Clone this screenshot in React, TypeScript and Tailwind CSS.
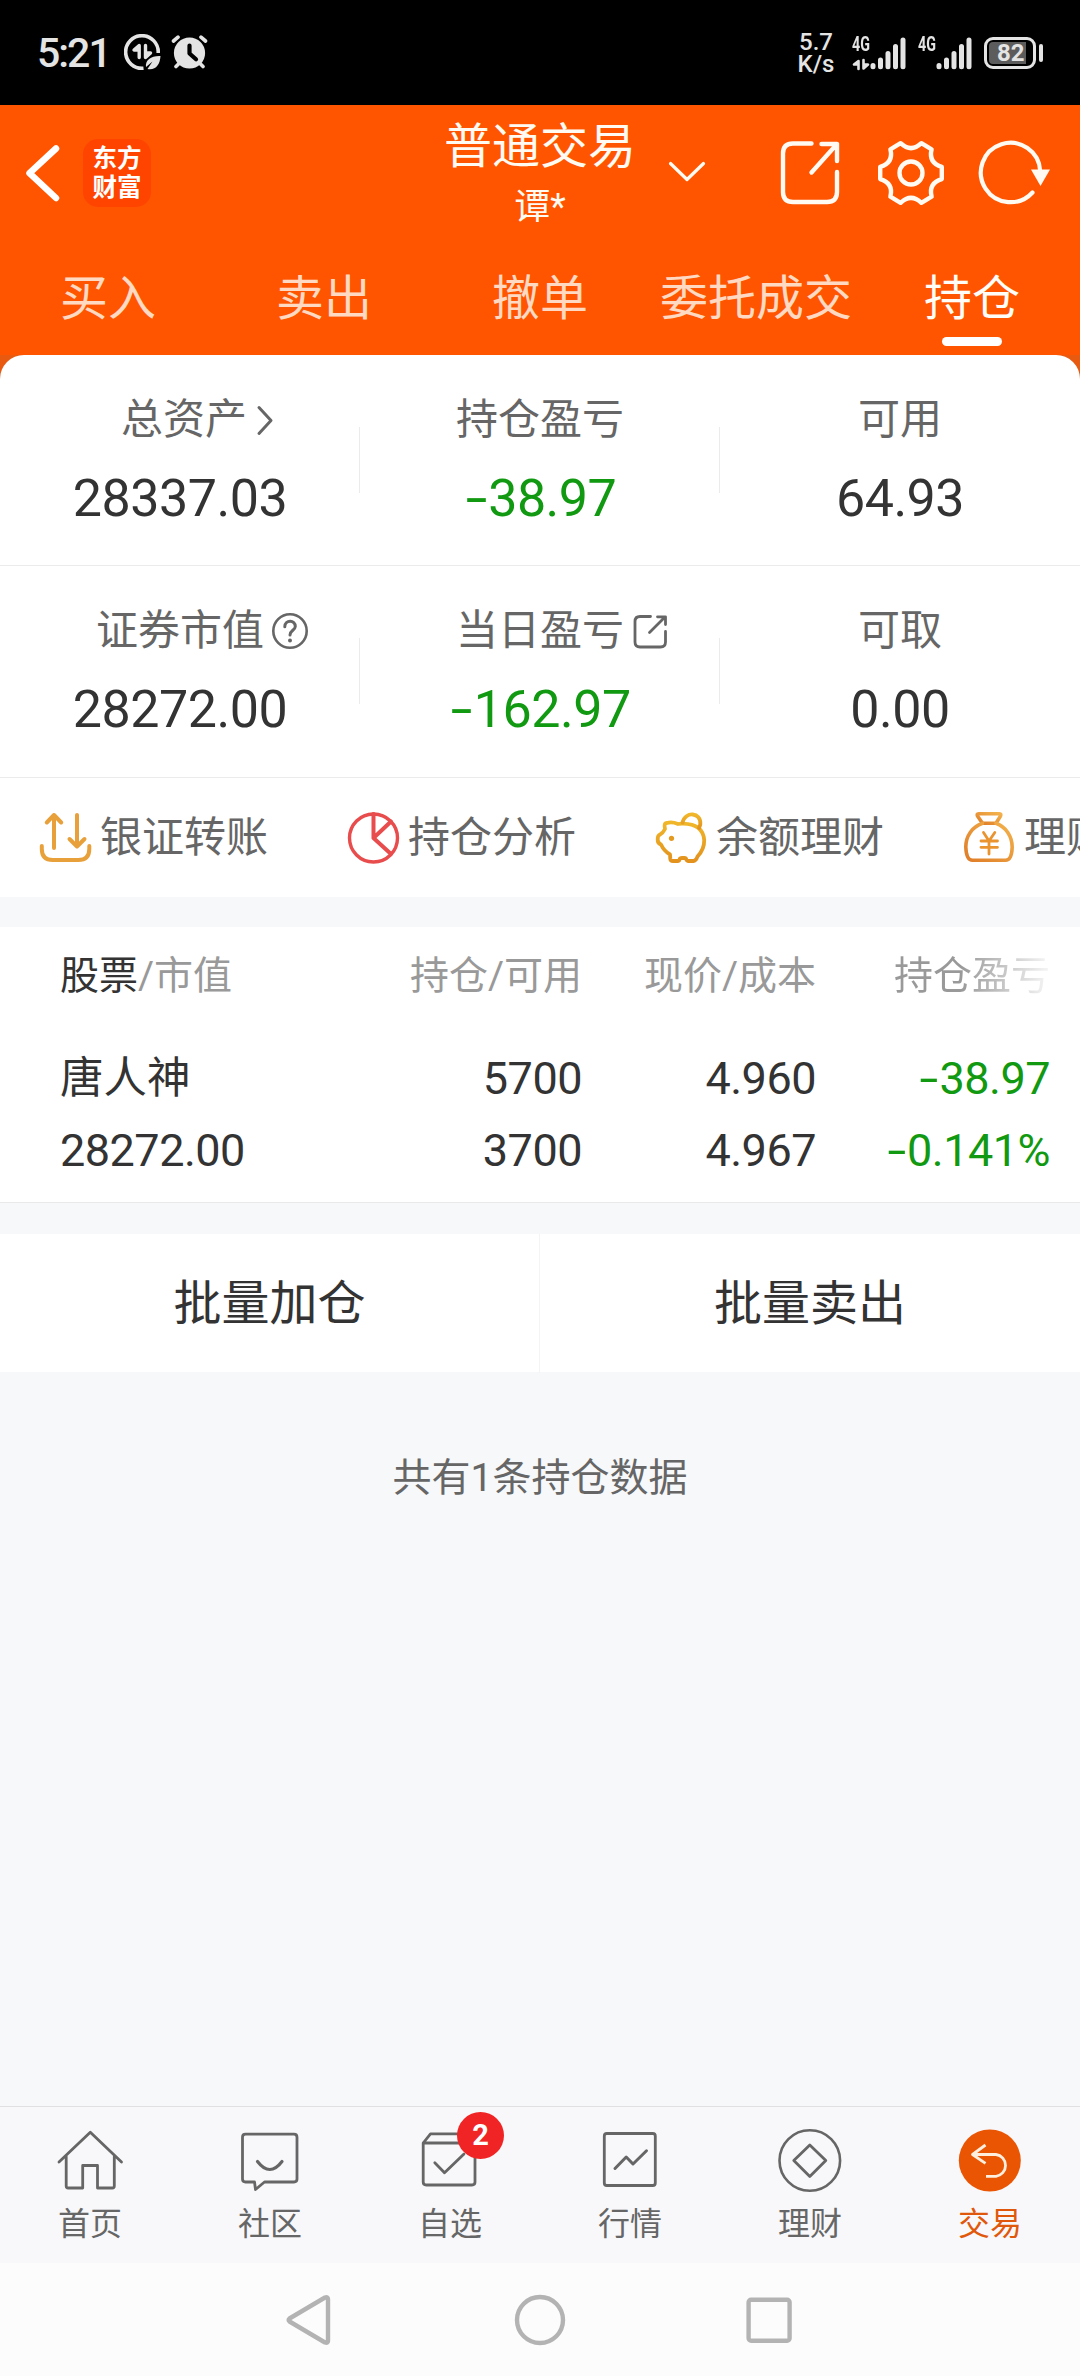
import type { ReactNode } from "react";

type IconProps = { box: string; className: string; children: ReactNode };

function Icon({ box, className, children }: IconProps) {
  return (
    <svg
      viewBox={box}
      className={`block shrink-0 ${className}`}
      fill="none"
      stroke="currentColor"
      strokeLinecap="round"
      strokeLinejoin="round"
    >
      {children}
    </svg>
  );
}

/* ---------- status bar ---------- */

function SignalBars() {
  return (
    <Icon box="0 0 36 34" className="h-[34px] w-[36px]">
      <g strokeWidth="5">
        <path d="M3 29.500v1.300M10.500 24v6.800M18 17.500v13.300M25.500 10.500v20.300M33 4v26.800" />
      </g>
    </Icon>
  );
}

function StatusBar() {
  return (
    <div className="flex h-[105px] items-center justify-between bg-black pl-[37px] pr-[37px] text-[#e4e4e4]">
      <div className="flex items-center">
        <span className="w-[71px] text-[41px] leading-[60px] font-medium tracking-[-2px] whitespace-nowrap">5:21</span>
        <Icon box="124 35 37 37" className="ml-[16px] h-[37px] w-[37px]">
          <path d="M158.200 54A16.300 16.300 0 1 0 143.500 69.200" strokeWidth="3.600" strokeLinecap="butt" />
          <path d="M139.200 58.500V46.500L134 51h5M145.500 46.500V58.500l5-4.500h-5" strokeWidth="3.400" />
          <path d="M160.500 57c-9-.5-15.500 4-14.500 11l6.500-5.500-5 7.500c8 1.500 12.500-4 13-13z" fill="currentColor" stroke="none" />
        </Icon>
        <Icon box="171 35 37 37" className="ml-[10px] h-[37px] w-[37px]">
          <circle cx="189.500" cy="54" r="15.600" fill="currentColor" stroke="none" />
          <path d="M173.500 42l4.500-3.800M205.500 42l-4.500-3.800M179 64.500l-3 3M200 64.500l3 3" strokeWidth="3.600" />
          <path d="M189.500 46.500v8l6.500 5.800" stroke="#000" strokeWidth="4.200" />
        </Icon>
      </div>
      <div className="flex items-center">
        <div className="flex w-[36px] flex-col items-center text-[24px] leading-[22px] font-medium">
          <span>5.7</span>
          <span className="whitespace-nowrap">K/s</span>
        </div>
        <div className="ml-[18px] flex h-[36px] w-[19px] flex-col justify-between">
          <span className="origin-left scale-x-[0.68] text-[21px] leading-[18px] font-bold">4G</span>
          <Icon box="0 0 18 13" className="h-[13px] w-[18px]">
            <path d="M6.500 11V3L2 6.500h4.500M11.500 2v8.500l4.500-4h-4.500" strokeWidth="2.600" />
          </Icon>
        </div>
        <div className="-ml-[1px]">
          <SignalBars />
        </div>
        <div className="ml-[12px] flex h-[36px] w-[18px] flex-col">
          <span className="origin-left scale-x-[0.68] text-[21px] leading-[18px] font-bold">4G</span>
        </div>
        <SignalBars />
        <div className="ml-[12px] flex h-[32px] w-[52px] items-center justify-center rounded-[9px] border-[3px] border-[#e4e4e4] p-[2px]">
          <div className="flex h-full w-full items-center rounded-[4px] bg-[linear-gradient(90deg,#5c5c5c_88%,#000_88%)] pl-[8px] text-[24px] leading-[22px] font-bold">
            82
          </div>
        </div>
        <div className="ml-[3px] h-[18px] w-[4px] rounded-full bg-[#e4e4e4]" />
      </div>
    </div>
  );
}

/* ---------- header ---------- */

function Header() {
  return (
    <div className="bg-[#ff5500] text-[#fffaf2]">
      <div className="grid h-[145px] grid-cols-3">
        <div className="flex h-[135px] items-center pl-[24px]">
          <Icon box="24 144 36 58" className="h-[58px] w-[36px]">
            <path d="M56 148.500L29.500 173.200L56 198" strokeWidth="6.500" stroke="#fff" />
          </Icon>
          <div className="ml-[23px] flex h-[68px] w-[68px] flex-col items-center justify-center rounded-[15px] bg-[#ff4400] text-[24.5px] leading-[29px] font-bold text-white">
            <span>东方</span>
            <span>财富</span>
          </div>
        </div>
        <div className="flex items-start justify-center gap-[32px] pt-[13px]">
          <div className="w-[38px]" />
          <div className="flex flex-col items-center">
            <span className="text-[48px] leading-[58px] whitespace-nowrap">普通交易</span>
            <span className="mt-[3px] text-[36px] leading-[56px]">谭*</span>
          </div>
          <Icon box="665 160 38 24" className="mt-[42px] h-[24px] w-[38px]">
            <path d="M667.500 163.500L684 179.500L700.500 163.500" strokeWidth="3.200" />
          </Icon>
        </div>
        <div className="flex h-[135px] items-center pl-[58px]">
          <Icon box="778 139 64 68" className="h-[68px] w-[64px]">
            <path d="M811.500 143.500H793q-10 0-10 10V192q0 10 10 10h34q10 0 10-10V172" strokeWidth="4.400" />
            <path d="M821.500 144H837V161M837 144L811.500 172.500" strokeWidth="4.400" />
          </Icon>
          <Icon box="-34 -34 68 68" className="ml-[35px] h-[68px] w-[68px]">
            <path
              d="M30.800-6.100V6.100Q17.300 10 20.600 23.700L10.400 29.800Q0 20 -10.400 29.800L-20.600 23.700Q-17.300 10 -30.800 6.100V-6.100Q-17.300-10 -20.600-23.700L-10.400-29.800Q0-20 10.400-29.800L20.600-23.700Q17.300-10 30.800-6.100Z"
              strokeWidth="4.400"
            />
            <circle r="11.500" strokeWidth="4.400" />
          </Icon>
          <Icon box="978 139 74 68" className="ml-[33px] h-[68px] w-[74px]">
            <path d="M1032.500 192.500A29.700 29.700 0 1 1 1040.200 171" strokeWidth="4.200" />
            <path d="M1031 169.500H1050L1040.500 186Z" fill="currentColor" stroke="none" />
          </Icon>
        </div>
      </div>
      <div className="grid h-[105px] grid-cols-5 text-center text-[48px] leading-[97px] text-[#ffd9c2]">
        <span>买入</span>
        <span>卖出</span>
        <span>撤单</span>
        <span className="whitespace-nowrap">委托成交</span>
        <div className="flex flex-col items-center text-[#fffdf8]">
          <span className="h-[87px]">持仓</span>
          <span className="h-[9px] w-[60px] rounded-full bg-white" />
        </div>
      </div>
    </div>
  );
}

/* ---------- asset summary ---------- */

function Amount({ value }: { value: string }) {
  const negative = value.startsWith("-");
  return (
    <>
      {negative && <span className="inline-block w-[0.47em] scale-x-[1.5] text-center">-</span>}
      {negative ? value.slice(1) : value}
    </>
  );
}

type StatProps = { label: string; value: string; icon?: ReactNode; green?: boolean; shift?: boolean; divider?: boolean };

function Stat({ label, value, icon, green, shift, divider }: StatProps) {
  return (
    <div className="relative flex flex-col items-center pt-[35px]">
      <div className={`relative text-[42px] leading-[60px] text-[#666] ${shift ? "ml-[8px]" : ""}`}>
        {label}
        {icon && <span className="absolute top-0 left-full flex h-[60px] items-center">{icon}</span>}
      </div>
      <div
        className={`mt-[17px] text-[52px] leading-[64px] tracking-[-0.5px] whitespace-nowrap ${green ? "text-[#119911]" : "text-[#333]"}`}
      >
        <Amount value={value} />
      </div>
      {divider && <span className="absolute top-[72px] right-0 h-[66px] w-px bg-[#ebebeb]" />}
    </div>
  );
}

function Summary() {
  return (
    <div className="bg-[linear-gradient(#e85a10_24px,#fff_24px)]">
      <div className="rounded-t-[24px] bg-white">
        <div className="grid h-[211px] grid-cols-3 border-b border-[#ebebeb]">
          <Stat
            label="总资产"
            value="28337.03"
            shift
            divider
            icon={
              <Icon box="256 402 18 33" className="ml-[9px] h-[33px] w-[18px]">
                <path d="M259 405.500L271 418.500L259 431.500" strokeWidth="3" />
              </Icon>
            }
          />
          <Stat label="持仓盈亏" value="-38.97" green divider />
          <Stat label="可用" value="64.93" />
        </div>
        <div className="grid h-[212px] grid-cols-3 border-b border-[#ebebeb]">
          <Stat
            label="证券市值"
            value="28272.00"
            divider
            icon={
              <Icon box="-19 -19 38 38" className="ml-[7px] h-[38px] w-[38px]">
                <circle r="16.700" strokeWidth="2.600" />
                <path d="M-5.200-4.200C-5.200-11.500 5.500-11.500 5.300-4.500C5.200-.8 0-.5 0 4" strokeWidth="3" />
                <circle cy="9.600" r="2" fill="currentColor" stroke="none" />
              </Icon>
            }
          />
          <Stat
            label="当日盈亏"
            value="-162.97"
            green
            divider
            icon={
              <Icon box="632 611 37 37" className="ml-[8px] h-[37px] w-[37px]">
                <path d="M650.500 614.500H640q-5 0-5 5V640q0 5 5 5h20.500q5 0 5-5V629.500" strokeWidth="2.800" />
                <path d="M657.500 614.800H665.500V622.500M665 615L649.500 630.500" strokeWidth="2.800" />
              </Icon>
            }
          />
          <Stat label="可取" value="0.00" />
        </div>
      </div>
    </div>
  );
}

/* ---------- quick actions ---------- */

function QuickAction({ label, children }: { label: string; children: ReactNode }) {
  return (
    <div className="flex w-[308px] shrink-0 items-center">
      {children}
      <span className="ml-[6px] text-[42px] leading-[60px] whitespace-nowrap text-[#666]">{label}</span>
    </div>
  );
}

function QuickActions() {
  return (
    <div className="flex h-[119px] items-center overflow-hidden bg-white pl-[38px]">
      <QuickAction label="银证转账">
        <Icon box="38 809 56 56" className="h-[56px] w-[56px] text-[#e8a03a]">
          <path
            d="M54 847V814M46.800 821.500L54 814L61.200 821.500M77 814V845M69.500 838L77 845.500L84.500 838M41.800 845v3q0 11 11 11h25.500q11 0 11-11v-3"
            strokeWidth="4"
          />
        </Icon>
      </QuickAction>
      <QuickAction label="持仓分析">
        <Icon box="346 809 56 56" className="h-[56px] w-[56px] text-[#e84c4c]">
          <circle cx="373.500" cy="837" r="24" strokeWidth="3.400" />
          <path d="M373.500 813V837L391 820.500M373.500 837L391 853" strokeWidth="4" />
        </Icon>
      </QuickAction>
      <QuickAction label="余额理财">
        <Icon box="654 809 56 56" className="h-[56px] w-[56px]">
          <defs>
            <linearGradient id="pig" x1="0" y1="0" x2="0" y2="1">
              <stop offset="0" stopColor="#f0b72a" />
              <stop offset="1" stopColor="#e3921e" />
            </linearGradient>
          </defs>
          <g stroke="url(#pig)" strokeWidth="3.800">
            <path d="M667 822Q663.500 822 665 828Q663 832 660 833.500Q657.500 834.500 657.700 838.500Q657.500 842 661 843.500Q664 850 670 853.500L670.300 858Q670.500 860 673 860H677.500Q679.300 860 679.500 858.500Q680 857 682 857H684.500Q686 857 686.300 858.500Q686.800 860 688.500 860H693.500Q696 860 697.500 855.500Q704.500 848 704.200 839Q703 823 683 822.600Q680.500 822.500 678 823Q672 820.500 667 822Z" />
            <path d="M682.500 821.500C685 810 701.500 811 700.300 823.500L699 827" />
          </g>
          <circle cx="671.500" cy="837.300" r="2.600" fill="#e39a1e" stroke="none" />
        </Icon>
      </QuickAction>
      <QuickAction label="理财产品">
        <Icon box="962 809 56 56" className="h-[56px] w-[56px]">
          <defs>
            <linearGradient id="bag" x1="1" y1="0" x2="0" y2="1">
              <stop offset="0" stopColor="#f3b24c" />
              <stop offset="1" stopColor="#df7d28" />
            </linearGradient>
          </defs>
          <g stroke="url(#bag)" strokeWidth="3.600">
            <path d="M978.500 812.800H999.500Q1001.500 812.800 1000.500 815L996 822.300H982.500L977.500 815Q976.500 812.800 978.500 812.800Z" />
            <path d="M982.500 822.300C972 826 965.800 835 965.800 846Q966.300 859.300 972.500 859.300H1005.500Q1011.800 859.300 1012.200 846C1012 835 1006 826 996 822.300" />
          </g>
          <path d="M983.500 831.500L989 840L994.800 831.500M981 840H997.500M981 846.300H997.500M989 840V853" stroke="#ea9430" strokeWidth="2.800" />
        </Icon>
      </QuickAction>
    </div>
  );
}

/* ---------- holdings table ---------- */

const columns = "grid grid-cols-[290px_232px_234px_234px] pl-[60px] whitespace-nowrap";

function Holdings() {
  return (
    <div className="h-[276px] border-b border-[#e9e9e9] bg-white pt-[19px]">
      <div className={`${columns} text-[39px] leading-[60px] text-[#999]`}>
        <div>
          <span className="text-[#333]">股票</span>/市值
        </div>
        <div className="text-right">持仓/可用</div>
        <div className="text-right">现价/成本</div>
        <div className="bg-[linear-gradient(90deg,#999_62%,#f2f2f2_98%)] bg-clip-text text-right text-transparent">持仓盈亏</div>
      </div>
      <div className={`${columns} mt-[37px] text-[45px] leading-[72px] tracking-[-0.5px] text-[#333]`}>
        <div>
          <div className="text-[43.5px] tracking-normal">唐人神</div>
          <div>28272.00</div>
        </div>
        <div className="text-right">
          <div>5700</div>
          <div>3700</div>
        </div>
        <div className="text-right">
          <div>4.960</div>
          <div>4.967</div>
        </div>
        <div className="text-right text-[#119911]">
          <div>
            <Amount value="-38.97" />
          </div>
          <div>
            <Amount value="-0.141%" />
          </div>
        </div>
      </div>
    </div>
  );
}

/* ---------- bottom navigation ---------- */

function NavItem({ label, active, badge, children }: { label: string; active?: boolean; badge?: string; children: ReactNode }) {
  return (
    <div className={`flex flex-col items-center pt-[19px] ${active ? "text-[#e0580c]" : "text-[#666]"}`}>
      <div className="relative">
        {children}
        {badge && (
          <span className="absolute -top-[14px] left-[42px] flex h-[47px] w-[47px] items-center justify-center rounded-full bg-[#f02424] text-[29px] leading-none font-bold text-white">
            {badge}
          </span>
        )}
      </div>
      <span className="mt-[4px] text-[32px] leading-[48px]">{label}</span>
    </div>
  );
}

const navIcon = "h-[70px] w-[70px]";

function BottomNav() {
  return (
    <div className="grid h-[157px] grid-cols-6 border-t border-[#e0e0e2] bg-[#f8f8fa]">
      <NavItem label="首页">
        <Icon box="54.500 2127 70 70" className={navIcon}>
          <path
            d="M58.500 2163L89.800 2133.300L121 2163M65.700 2157.500V2187q0 2 2 2H82.200V2166.500H97V2189H111.800q2 0 2-2V2157.500"
            strokeWidth="2.800"
          />
        </Icon>
      </NavItem>
      <NavItem label="社区">
        <Icon box="235 2127 70 70" className={navIcon}>
          <path
            d="M245.500 2135.200H294q3 0 3 3V2180q0 3-3 3H264.500L255.500 2190.500L254.500 2183H245.500q-3 0-3-3V2138.200q0-3 3-3Z"
            strokeWidth="2.800"
          />
          <path d="M257.500 2162.500Q269.800 2178.500 282 2162.500" strokeWidth="3.200" />
        </Icon>
      </NavItem>
      <NavItem label="自选" badge="2">
        <Icon box="415 2127 70 70" className={navIcon}>
          <path
            d="M423.200 2144H475V2183q0 3-3 3H426.200q-3 0-3-3V2144L430.500 2134.800H468L475 2144M434.800 2163.800L444.500 2173.800L464 2155"
            strokeWidth="2.800"
          />
        </Icon>
      </NavItem>
      <NavItem label="行情">
        <Icon box="594.500 2127 70 70" className={navIcon}>
          <rect x="603.800" y="2134.500" width="51" height="52" rx="2.500" strokeWidth="2.800" />
          <path d="M614.500 2169.500L625.700 2158L632.500 2165L646 2151.800" strokeWidth="3" />
        </Icon>
      </NavItem>
      <NavItem label="理财">
        <Icon box="774.500 2127 70 70" className={navIcon}>
          <circle cx="809.300" cy="2161.500" r="30.300" strokeWidth="2.600" />
          <path d="M809.300 2146L825.300 2161.500L809.300 2177.500L793.300 2161.500Z" strokeWidth="2.800" />
        </Icon>
      </NavItem>
      <NavItem label="交易" active>
        <Icon box="954.500 2127 70 70" className={navIcon}>
          <circle cx="989.300" cy="2161.500" r="31" fill="#ea5504" stroke="none" />
          <path
            d="M985 2146L972 2155.500L985 2164.300M972 2155.500H995.500A11 11 0 0 1 995.500 2177.300H985.500"
            stroke="#fdeedd"
            strokeWidth="2.800"
            strokeLinecap="butt"
          />
        </Icon>
      </NavItem>
    </div>
  );
}

function SystemNav() {
  return (
    <div className="flex h-[113px] items-center justify-center gap-[179px] bg-[#fcfcfc] text-[#b3b3b3]">
      <Icon box="285 2294 50 52" className="h-[52px] w-[50px]">
        <path d="M289.500 2318.500L325 2297.500Q328 2296.500 328 2299V2341Q328 2343.500 325 2342.500L289.500 2321.500Q288 2320 289.500 2318.500Z" strokeWidth="4.400" />
      </Icon>
      <Icon box="-26 -26 52 52" className="h-[52px] w-[52px]">
        <circle r="23" strokeWidth="4.400" />
      </Icon>
      <Icon box="745 2294 50 52" className="h-[52px] w-[50px]">
        <rect x="748.600" y="2299.800" width="41" height="41" rx="2.500" strokeWidth="4.400" />
      </Icon>
    </div>
  );
}

export default function App() {
  return (
    <div className="flex h-[2376px] w-[1080px] flex-col overflow-hidden bg-[#f7f8fa] font-[Roboto,'Noto_Sans_CJK_SC',sans-serif]">
      <StatusBar />
      <Header />
      <Summary />
      <QuickActions />
      <div className="h-[30px]" />
      <Holdings />
      <div className="h-[31px]" />
      <div className="grid h-[138px] grid-cols-2 bg-white text-center text-[48px] leading-[139px] text-[#333]">
        <span className="border-r border-[#f4f4f5]">批量加仓</span>
        <span>批量卖出</span>
      </div>
      <div className="flex-1 pt-[76px] text-center text-[39px] leading-[60px] text-[#666]">共有1条持仓数据</div>
      <BottomNav />
      <SystemNav />
    </div>
  );
}
